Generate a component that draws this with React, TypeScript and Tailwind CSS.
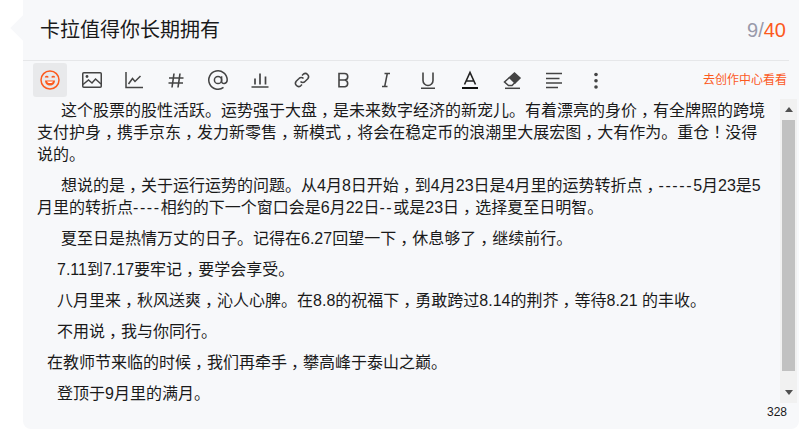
import type { ReactNode } from "react";

const paragraphs = [
  {
    indent: "indent-[24px]",
    text: "这个股票的股性活跃。运势强于大盘，是未来数字经济的新宠儿。有着漂亮的身价，有全牌照的跨境支付护身，携手京东，发力新零售，新模式，将会在稳定币的浪潮里大展宏图，大有作为。重仓！没得说的。",
  },
  {
    indent: "indent-[24px]",
    text: "想说的是，关于运行运势的问题。从4月8日开始，到4月23日是4月里的运势转折点，-----5月23是5月里的转折点----相约的下一个窗口会是6月22日--或是23日，选择夏至日明智。",
  },
  { indent: "indent-[24px]", text: "夏至日是热情万丈的日子。记得在6.27回望一下，休息够了，继续前行。" },
  { indent: "indent-[20px]", text: "7.11到7.17要牢记，要学会享受。" },
  { indent: "indent-[20px]", text: "八月里来，秋风送爽，沁人心脾。在8.8的祝福下，勇敢跨过8.14的荆芥，等待8.21 的丰收。" },
  { indent: "indent-[20px]", text: "不用说，我与你同行。" },
  { indent: "indent-[10px]", text: "在教师节来临的时候，我们再牵手，攀高峰于泰山之巅。" },
  { indent: "indent-[20px]", text: "登顶于9月里的满月。" },
];

// commas sit in the middle of the cell and dashes run wider in the original
function renderText(text: string) {
  return text.split(/(，|！|-+)/).map((part, i) => {
    if (part === "，" || part === "！") {
      return (
        <span key={i} className="px-[4px] [font-feature-settings:'halt']">
          {part}
        </span>
      );
    }
    if (part.startsWith("-")) {
      return (
        <span key={i} className="tracking-[1.600px]">
          {part}
        </span>
      );
    }
    return part;
  });
}

function Icon({ children }: { children: ReactNode }) {
  return (
    <svg width="20" height="20" viewBox="0 0 20 20" fill="none" stroke="#444" strokeWidth="1.5">
      {children}
    </svg>
  );
}

const tools: ReactNode[] = [
  <Icon key="img">
    <rect x="0.750" y="2.750" width="18.500" height="14.500" rx="1" />
    <circle cx="5" cy="6.500" r="1.400" fill="#444" stroke="none" />
    <path d="M1 14.500 6.500 10l3.500 3 3.500-4 5.500 5" />
  </Icon>,
  <Icon key="chart">
    <path d="M2 2v15.500h17" />
    <path d="M4.500 14 8.500 8.500l2.500 3L16.500 6" />
  </Icon>,
  <Icon key="hash">
    <path d="M8 3.500 6 17.500M14 3.500l-2 14M3 8h14.500M2.500 13H17" strokeWidth="1.600" />
  </Icon>,
  <Icon key="at">
    <circle cx="10" cy="10" r="3.600" />
    <path d="M13.600 6.300v5.200c0 3 5.600 2.600 5.600-1.500a9.200 9.200 0 1 0-3.700 7.400" />
  </Icon>,
  <Icon key="bars">
    <path d="M1.500 17h17M5 14.500V8.500M10 14.500V3.500M15.500 14.500V6.500" strokeWidth="1.700" />
  </Icon>,
  <Icon key="link">
    <path d="M8.500 11.500a3 3 0 0 0 4.500 0l2.800-2.800a3.200 3.200 0 0 0-4.500-4.500L10 5.500" />
    <path d="M11.500 8.500a3 3 0 0 0-4.500 0l-2.800 2.800a3.200 3.200 0 0 0 4.500 4.500l1.300-1.300" />
  </Icon>,
  <Icon key="b">
    <path d="M5 3.500h5.500a3 3 0 0 1 0 6.500H5zM5 10h6a3.500 3.500 0 0 1 0 6.800H5z" strokeWidth="1.600" />
  </Icon>,
  <Icon key="i">
    <path d="M8.500 3.500h5.500M6 16.500h5.500M11.300 3.500 8.700 16.500" strokeWidth="1.500" />
  </Icon>,
  <Icon key="u">
    <path d="M5 2.500v8a5 5 0 0 0 10 0v-8M3 18.300h14" strokeWidth="1.600" />
  </Icon>,
  <Icon key="a">
    <path d="M4.500 14.500 10 2.500l5.500 12M6.300 11h7.400" stroke="#222" strokeWidth="1.600" />
    <path d="M2 18h16" stroke="#111" strokeWidth="2" />
  </Icon>,
  <Icon key="eraser">
    <path d="M7.500 7.500 2.500 12l4 3.500H10l3-3" />
    <path d="M12.500 3 18 8l-5 5-5.500-5.500z" fill="#444" />
    <path d="M3 18.300h15" />
  </Icon>,
  <Icon key="align">
    <path d="M2 3.500h16M2 8.500h13.500M2 13h16M2 17.500h12" strokeWidth="1.600" />
  </Icon>,
  <Icon key="more">
    <circle cx="10" cy="4.500" r="1.800" fill="#444" stroke="none" />
    <circle cx="10" cy="10.700" r="1.800" fill="#444" stroke="none" />
    <circle cx="10" cy="17" r="1.800" fill="#444" stroke="none" />
  </Icon>,
];

export default function App() {
  return (
    <div className="h-[442px] w-[799px] overflow-hidden bg-white font-['Liberation_Sans','Noto_Sans_CJK_SC',sans-serif] text-[#1f1f1f]">
      <div className="relative ml-[23px] h-[429px] rounded-b-lg bg-[#f7f8fa]">
        {/* little arrow on the left side */}
        <div className="absolute top-[19px] left-[-9px] h-[18px] w-[18px] rotate-45 bg-[#f7f8fa]" />

        <div className="relative mr-[10px] flex h-[61px] items-center justify-between border-b border-[#e6e7e9] pr-[3px] pl-[17px]">
          <span className="text-[20px] text-[#1a1a1a]">卡拉值得你长期拥有</span>
          <span className="text-[20px] text-[#999aaa]">
            9/<span className="text-[#fc5a1e]">40</span>
          </span>
        </div>

        <div className="relative flex h-[38px] items-center pr-[12px] pl-[10px]">
          <div className="flex h-[34px] w-[34px] items-center justify-center rounded-[3px] bg-[#e8e9eb]">
            <svg width="20" height="20" viewBox="0 0 20 20" fill="none" stroke="#fc5a1e" strokeWidth="1.500">
              <circle cx="10" cy="10" r="9" />
              <path d="M5.500 7.500a1.300 1.300 0 0 1 2.500 0M12 7.500a1.300 1.300 0 0 1 2.500 0" />
              <path d="M5 10.500h10c0 3-2.200 5-5 5s-5-2-5-5z" fill="#fc5a1e" stroke="none" />
              <path d="M7 11.500h6c-.5 1-1.500 1.500-3 1.500s-2.500-.5-3-1.500z" fill="#fff" stroke="none" />
            </svg>
          </div>
          <div className="ml-[15px] flex gap-[22px]">{tools}</div>
          <span className="ml-auto text-[12px] text-[#fc5a1e]">去创作中心看看</span>
        </div>

        <div className="flex h-[304px]">
          <div className="flex-1 pt-[1px] pr-[8px] pl-[14px] text-[16px] leading-[22px] text-[#1a1a1a]">
            {paragraphs.map((p, i) => (
              <p key={i} className={`mb-[9px] ${p.indent}`}>
                {renderText(p.text)}
              </p>
            ))}
          </div>
          <div className="mr-[2px] flex w-[17px] flex-col items-center bg-[#f1f1f1]">
            <div className="flex h-[21px] items-center">
              <div className="h-0 w-0 border-x-[4px] border-b-[5px] border-x-transparent border-b-[#505050]" />
            </div>
            <div className="h-[251px] w-[13px] bg-[#c1c1c1]" />
            <div className="mt-auto flex h-[21px] items-center">
              <div className="h-0 w-0 border-x-[4px] border-t-[5px] border-x-transparent border-t-[#505050]" />
            </div>
          </div>
        </div>

        <div className="mt-[1px] pr-[12px] text-right text-[12px] leading-[16px] text-[#1a1a1a]">328</div>
      </div>
    </div>
  );
}
